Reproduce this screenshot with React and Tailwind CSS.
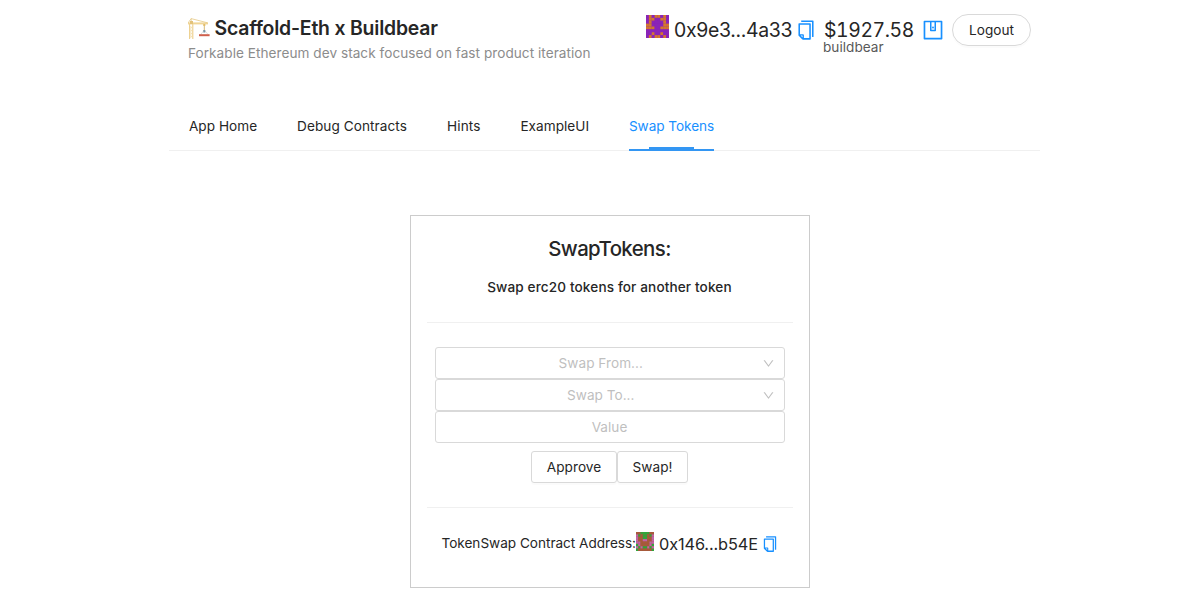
import React from "react";
import { AiOutlineCopy, AiOutlineDown, AiOutlineWallet } from "react-icons/ai";

const ACCOUNT = ["POPOOPOP", "POOPPOOP", "POPPPPOP", "OOPPPPOO", "OOOPPOOO", "PPPPPPPP", "PPOPPOPP", "POPOOPOP"];
const CONTRACT = ["BBGGGGBB", "PGBGGBGP", "PBBGGBBP", "PBBPPBBP", "PPBBBBPP", "GPBBBBPG", "PGPGGPGP", "GBBBBBBG"];
const ACCOUNT_COLORS = { P: "#8a24b8", O: "#d4772c" };
const CONTRACT_COLORS = { B: "#a75a3b", G: "#2fa53a", P: "#c064a8" };

function Blockie({ rows, colors, className }) {
  return (
    <svg viewBox="0 0 8 8" preserveAspectRatio="none" className={className}>
      <rect width="8" height="8" fill={colors[rows[4][3]]} />
      {rows.flatMap((row, y) =>
        [...row].map((c, x) => <rect key={`${x}-${y}`} x={x} y={y} width="1" height="1" fill={colors[c]} />)
      )}
    </svg>
  );
}

function Crane() {
  return (
    <svg viewBox="0 0 22 21" className="h-[21px] w-[22px] shrink-0" fill="none">
      <path d="M1.6 5v16M4.8 5v16" stroke="#edcf8c" strokeWidth="1.1" />
      <path d="M1.6 8l3.2 3-3.2 3 3.2 3-3.2 3M4.8 8l-3.2 3 3.2 3-3.2 3 3.2 3" stroke="#f1d99f" strokeWidth=".7" />
      <path d="M0 4.4h20v2H0z" fill="#f0d596" />
      <path d="M3.2 .6L0 5M3.2 .6L19.5 4.8M3.2 .5v5" stroke="#e6c987" strokeWidth=".8" />
      <path d="M2 3h3v3H2z" fill="#e3c27a" />
      <path d="M16.3 6v7" stroke="#d5b878" strokeWidth="1" />
      <path d="M15.3 6h2v2h-2z" fill="#e2bd69" />
      <path d="M16.3 12l-3.6 4.5M16.3 12l3.8 4.5" stroke="#cfd3d6" strokeWidth=".7" />
      <path d="M15.3 12h2v2.5h-2z" fill="#7895a5" />
      <path d="M11 16.2h10.6v2H11z" fill="#cf5f4c" />
    </svg>
  );
}

const TABS = [
  { label: "App Home", className: "w-[68px]" },
  { label: "Debug Contracts", className: "w-[110px] tracking-[0.07px]" },
  { label: "Hints", className: "w-[33.5px] tracking-[0.1px]" },
  { label: "ExampleUI", className: "w-[68.5px]" },
  { label: "Swap Tokens", className: "w-[85px] tracking-[-0.05px]", active: true },
];

function Tab({ label, className, active }) {
  return (
    <div className={`relative flex h-12 shrink-0 justify-center whitespace-nowrap pt-3 ${className} ${active ? "text-[#1890ff]" : ""}`}>
      {label}
      {active && (
        <>
          <span className="absolute bottom-0 left-0 h-0.5 w-full bg-[#3396f3]" />
          <span className="absolute bottom-0.5 left-5 h-0.5 w-[45px] bg-[#3396f3]" />
        </>
      )}
    </div>
  );
}

function Select({ children }) {
  return (
    <div className="flex h-8 items-center rounded-[3px] border border-[#d9d9d9] pl-[11px] pr-[9.5px] text-[#bfbfbf]">
      <span className="flex-1 pr-[7px] text-center">{children}</span>
      <AiOutlineDown className="size-[13px]" />
    </div>
  );
}

function Button({ children, className }) {
  return (
    <button className={`flex h-8 items-center justify-center border border-[#d9d9d9] shadow-[0_2px_0_rgba(0,0,0,0.016)] ${className}`}>
      {children}
    </button>
  );
}

export default function App() {
  return (
    <div className="h-[600px] overflow-hidden bg-white font-['Inter','Liberation_Sans',sans-serif] text-[13.6px] leading-[22px] text-[#262626] tracking-[0.03px]">
      <header className="flex h-[102px] justify-between pl-[188px] pr-[169px]">
        <div className="pt-3">
          <div className="flex h-8 items-center">
            <Crane />
            <h1 className="ml-[4.5px] whitespace-nowrap text-[19.4px] font-semibold leading-8 tracking-[-0.19px]">Scaffold-Eth x Buildbear</h1>
          </div>
          <p className="-mt-[2px] whitespace-nowrap tracking-[0.04px] text-[#8c8c8c]">Forkable Ethereum dev stack focused on fast product iteration</p>
        </div>
        <div className="flex items-start pt-[14px]">
          <Blockie rows={ACCOUNT} colors={ACCOUNT_COLORS} className="mt-px h-[23px] w-[23px]" />
          <span className="ml-[5px] w-[119px] whitespace-nowrap text-[19.4px] leading-8 tracking-[-0.3px]">0x9e3...4a33</span>
          <AiOutlineCopy className="ml-[2px] mt-[5px] size-[22px] text-[#1890ff]" />
          <div className="ml-[7px] w-[91px] pt-[5px]">
            <div className="whitespace-nowrap text-[19.4px] leading-[22px] tabular-nums tracking-[-0.4px]">$1927.58</div>
            <div className="-ml-px -mt-px leading-[14px] text-[#595959]">buildbear</div>
          </div>
          <AiOutlineWallet className="ml-[6px] mt-1 size-6 -rotate-90 text-[#1890ff]" />
          <Button className="ml-[7px] w-[79px] rounded-full">Logout</Button>
        </div>
      </header>

      <nav className="ml-[169px] flex h-[49px] w-[871px] gap-10 border-b border-[#f0f0f0] pl-5 pt-px">
        {TABS.map((tab) => (
          <Tab key={tab.label} {...tab} />
        ))}
      </nav>

      <main className="ml-[410px] mt-16 h-[373px] w-[400px] border border-[#cccccc] px-4 pt-4 text-center">
        <h2 className="h-[34px] pr-px text-[20.4px] font-medium leading-[34px] tracking-[-0.6px]">SwapTokens:</h2>
        <h4 className="mt-[10px] pr-px font-medium tracking-[0.12px]">Swap erc20 tokens for another token</h4>
        <hr className="mt-6 border-[#f0f0f0]" />
        <div className="mx-2 mt-6">
          <Select>Swap From...</Select>
          <Select>Swap To...</Select>
          <div className="flex h-8 items-center justify-center rounded-[3px] border border-[#d9d9d9] pr-px text-[#bfbfbf]">Value</div>
          <div className="mt-2 flex justify-center pr-px">
            <Button className="w-[86px] rounded-[3px]">Approve</Button>
            <Button className="w-[71px] rounded-[3px]">Swap!</Button>
          </div>
        </div>
        <hr className="mt-6 border-[#f0f0f0]" />
        <div className="mt-6 flex pl-[14.5px]">
          <span className="w-[194.5px] whitespace-nowrap text-left tracking-[-0.02px]">TokenSwap Contract Address:</span>
          <Blockie rows={CONTRACT} colors={CONTRACT_COLORS} className="h-[19px] w-[18px]" />
          <span className="ml-[5px] w-[100px] whitespace-nowrap text-left text-[16.3px] leading-6 tracking-[-0.1px]">0x146...b54E</span>
          <AiOutlineCopy className="ml-[2px] mt-[3px] size-[18px] text-[#1890ff]" />
        </div>
      </main>
    </div>
  );
}
